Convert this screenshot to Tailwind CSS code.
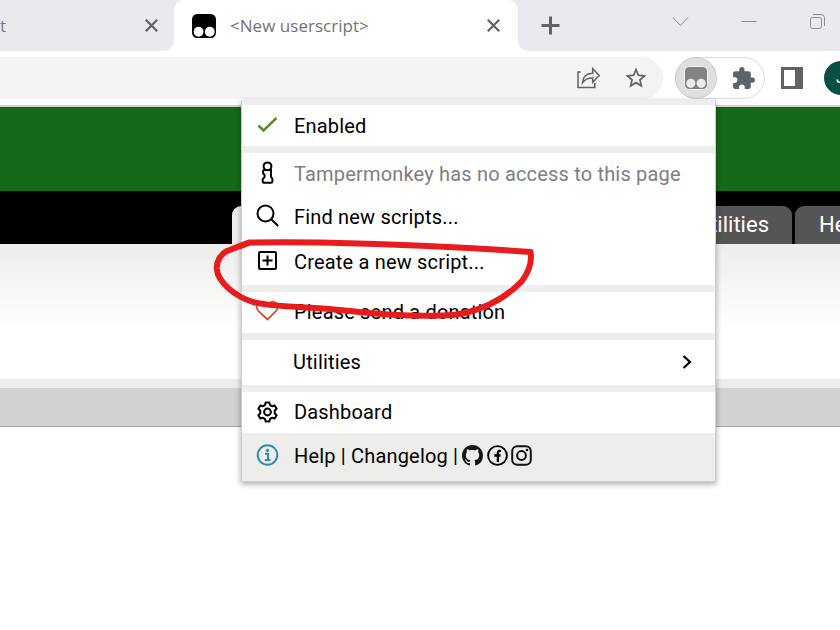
<!DOCTYPE html>
<html lang="en">
<head>
<meta charset="utf-8">
<title>Tampermonkey menu</title>
<script src="https://cdn.jsdelivr.net/npm/@tailwindcss/browser@4"></script>
</head>
<body class="bg-white">
<div class="relative flex h-[630px] w-[840px] flex-col overflow-hidden bg-white font-['Roboto',sans-serif]">
  <!-- Tab strip -->
  <div class="flex h-[51px] shrink-0 bg-white">
    <div class="flex w-[174px] items-center justify-between rounded-br-[10px] bg-[#e8eaed] pr-[16px] font-['Open_Sans',sans-serif] text-[17px] text-[#777a7e]">
      <span>t</span>
      <svg class="h-[13px] w-[13px]" viewBox="0 0 13 13" fill="none" stroke="#5f6368" stroke-width="2.2"><path d="M.8.8 12.2 12.2M12.2.8.8 12.2"/></svg>
    </div>
    <div class="w-[344px] bg-[#e8eaed]">
      <div class="flex h-full items-center rounded-t-[10px] bg-white pr-[18px] pl-[18px]">
        <svg class="h-[24px] w-[24px]" viewBox="0 0 23 23"><rect width="23" height="23" rx="5"/><circle cx="6.3" cy="17" r="4.7" fill="#fff"/><circle cx="17" cy="17" r="4.7" fill="#fff"/></svg>
        <span class="ml-[14px] grow font-['Open_Sans',sans-serif] text-[17px] tracking-[0.03px] text-[#707377]">&lt;New userscript&gt;</span>
        <svg class="h-[13px] w-[13px]" viewBox="0 0 13 13" fill="none" stroke="#5f6368" stroke-width="2.2"><path d="M.8.8 12.2 12.2M12.2.8.8 12.2"/></svg>
      </div>
    </div>
    <div class="flex grow items-start rounded-bl-[10px] bg-[#e8eaed] pl-[23px]">
      <svg class="mt-[16px] h-[19px] w-[19px] shrink-0" viewBox="0 0 19 19" fill="none" stroke="#5f6368" stroke-width="3"><path d="M9.5.5v18M.5 9.5h18"/></svg>
      <svg class="mt-[16px] ml-[112px] h-[11px] w-[17px] shrink-0" viewBox="0 0 17 11" fill="none" stroke="#8a8c8f"><path d="m1 1.500 7.500 8 7.500-8"/></svg>
      <svg class="mt-[16px] ml-[52px] h-[11px] w-[16px] shrink-0" viewBox="0 0 16 11" fill="none" stroke="#8a8c8f"><path d="M.5 5.500h15"/></svg>
      <svg class="mt-[13px] ml-[52px] h-[17px] w-[17px] shrink-0" viewBox="0 0 17 17" fill="none" stroke="#8a8c8f"><rect x="1.500" y="4.500" width="11" height="11" rx="2"/><path d="M4 1.500h8a3.500 3.500 0 0 1 3.500 3.500v8"/></svg>
    </div>
  </div>
  <!-- Toolbar -->
  <div class="flex h-[54px] shrink-0 items-start bg-white pt-[6px]">
    <div class="flex h-[42px] w-[663px] shrink-0 items-center justify-end rounded-r-full bg-[#f1f3f4] pr-[15px]">
      <svg class="h-[24px] w-[25px]" viewBox="0 0 25 24" fill="none" stroke="#5f6368" stroke-width="1.500"><path d="M4.700 6H2v15.500h16.800v-4.500"/><path d="M6.500 16.700c.4-5.600 3.900-9.200 10.200-9.400V2.700l6.500 6.900-6.500 6.700v-4.300c-4.500-.1-7.600 1.200-10.200 4.700Z"/></svg>
      <svg class="ml-[23px] h-[24px] w-[24px]" viewBox="0 0 24 24" fill="#5f6368"><path d="m22.700 9.200-7.700-.7L12 1.500l-3 7-7.700.7 5.800 5-1.700 7.400L12 17.700l6.600 3.900-1.700-7.400zM12 15.600l-4 2.400 1-4.500-3.500-3 4.700-.4L12 5.800l1.800 4.300 4.700.4-3.500 3L16 18z"/></svg>
    </div>
    <div class="ml-[12px] flex h-[42px] w-[90px] shrink-0 items-center rounded-full border border-[#dedfe0] shadow-[inset_0_0_1px_#ddd]">
      <div class="-ml-px flex h-[42px] w-[42px] items-center justify-center rounded-full border border-[#cdcdcd] bg-[#dfdfdf]">
        <svg class="h-[24px] w-[24px]" viewBox="0 0 24 24"><rect x=".5" y=".5" width="23" height="23" rx="5" fill="#828282" stroke="#f0f0f0"/><circle cx="6.800" cy="17.300" r="4.600" fill="#eaeaea"/><circle cx="17.200" cy="17.300" r="4.600" fill="#eaeaea"/></svg>
      </div>
      <svg class="ml-[14px] h-[25px] w-[25px]" viewBox="0 0 24 24" fill="#5f6368"><path d="M20.500 11H19V7c0-1.100-.9-2-2-2h-4V3.500a2.500 2.500 0 0 0-5 0V5H4c-1.100 0-2 .9-2 2v3.800h1.500a2.700 2.700 0 0 1 0 5.400H2V20c0 1.100.9 2 2 2h3.800v-1.500a2.700 2.700 0 0 1 5.400 0V22H17c1.100 0 2-.9 2-2v-4h1.500a2.500 2.500 0 0 0 0-5z"/></svg>
    </div>
    <svg class="mt-[10px] ml-[16px] h-[22px] w-[22px] shrink-0" viewBox="0 0 22 22"><path fill="#5f6368" fill-rule="evenodd" d="M0 0h22v22H0zM3 3v16h11V3z"/></svg>
    <div class="mt-[4px] ml-[21px] flex h-[34px] w-[34px] shrink-0 items-center rounded-full bg-[#075043] pl-[12px] text-[16px] text-white">J</div>
  </div>
  <div class="h-[2px] shrink-0 bg-[#d3d4d5]"></div>
  <!-- Page -->
  <div class="h-[84px] shrink-0 bg-[#146a18]"></div>
  <div class="flex h-[53px] shrink-0 items-end bg-black pl-[232px]">
    <div class="h-[38px] w-[120px] shrink-0 rounded-t-[9px] bg-[#ededeb]"></div>
    <div class="ml-[308px] flex h-[38px] w-[132px] shrink-0 items-center justify-end rounded-t-[9px] bg-[#555] pr-[23px] pb-[2px] text-[22px] text-white">Utilities</div>
    <div class="ml-[3px] flex h-[38px] w-[90px] shrink-0 items-center rounded-t-[9px] bg-[#555] pb-[2px] pl-[24px] text-[22px] text-white">Help</div>
  </div>
  <div class="h-[82px] shrink-0 bg-linear-to-b from-[#ededeb] to-white"></div>
  <div class="h-[53px] shrink-0 bg-white"></div>
  <div class="h-[9px] shrink-0 bg-[#ededeb]"></div>
  <div class="h-[39px] shrink-0 border-b border-[#a5a5a5] bg-[#d2d2d2]"></div>

  <!-- Extension popup -->
  <div class="absolute top-[100px] left-[241px] flex w-[475px] flex-col gap-[7px] border border-t-0 border-[#cfcfcf] bg-[#ededeb] pt-[5px] text-[20px] tracking-[0.18px] text-black shadow-[0_2px_6px_rgba(0,0,0,0.35)]">
    <div class="flex h-[41px] items-center bg-white pl-[13px]">
      <svg class="h-[24px] w-[24px]" viewBox="0 0 24 24" fill="none" stroke="#5c8f2c" stroke-width="2.600"><path d="m3.500 11.500 5 5L21.500 4"/></svg>
      <span class="ml-[15px]">Enabled</span>
    </div>
    <div class="flex flex-col bg-white">
      <div class="flex h-[42px] items-center pl-[13px] text-[#808080]">
        <svg class="-mt-[2px] h-[24px] w-[24px]" viewBox="0 0 24 24" fill="none" stroke="#000" stroke-width="2"><circle cx="12.500" cy="5.300" r="3.900"/><path d="M9.300 8.900h6.700v6.500c0 1.300 1.400 1.500 1.400 3v2c0 .9-.5 1.400-1.300 1.400H9c-.8 0-1.300-.5-1.300-1.400v-2c0-1.200 1.900-1.400 1.900-2.600v-1.500c0-1.100-1.500-1.200-1.500-2.300v-1.700c0-.8.500-1.400 1.200-1.400Z"/></svg>
        <span class="ml-[15px]">Tampermonkey has no access to this page</span>
      </div>
      <div class="flex h-[45px] items-center pb-[2px] pl-[13px]">
        <svg class="-mt-[1px] h-[24px] w-[24px]" viewBox="0 0 24 24" fill="none" stroke="#000" stroke-width="2"><circle cx="10.500" cy="9.500" r="8"/><path d="m16.200 15.300 7 6.700"/></svg>
        <span class="ml-[15px]">Find new scripts...</span>
      </div>
      <div class="flex h-[45px] items-center pb-[2px] pl-[13px]">
        <svg class="h-[24px] w-[24px]" viewBox="0 0 24 24" fill="none" stroke="#000" stroke-width="2"><rect x="4" y="2" width="17" height="17" rx="1"/><path d="M12.500 5.500v10M7.500 10.500h10"/></svg>
        <span class="ml-[15px]">Create a new script...</span>
      </div>
    </div>
    <div class="flex h-[41px] items-center bg-white pb-[2px] pl-[13px]">
      <svg class="-mt-[2px] h-[24px] w-[24px]" viewBox="0 0 24 24" fill="none" stroke="#dd4a33" stroke-width="1.800"><path d="M12.500 20.500 3.300 11.800C1.300 9.700 1 6.300 3.200 4.200 5.700 2 10.200 2.200 12.500 5.500c2.200-3.300 6.300-3.500 8.800-1.300 2.200 2.100 1.900 5.500-.1 7.600Z"/></svg>
      <span class="ml-[15px]">Please send a donation</span>
    </div>
    <div class="flex h-[45px] items-center justify-between bg-white pr-[23px] pb-[2px] pl-[51px]">
      <span>Utilities</span>
      <svg class="h-[14px] w-[10px]" viewBox="0 0 10 14" fill="none" stroke="#000" stroke-width="2.200"><path d="m1.500 1 6.500 6-6.500 6"/></svg>
    </div>
    <div class="flex flex-col">
      <div class="flex h-[41px] items-center bg-white pb-[2px] pl-[13px]">
        <svg class="h-[24px] w-[24px]" viewBox="0 0 24 24" fill="none" stroke="#000" stroke-width="2" stroke-linejoin="round"><circle cx="12.500" cy="12" r="3.400"/><path d="M10.700 2.500h3.600l.8 2.600 1.900 1.100 2.700-.7 1.900 3.300-1.900 2v2.400l1.900 2-1.900 3.300-2.700-.7-1.900 1.100-.8 2.600h-3.600l-.8-2.600-1.900-1.100-2.700.7-1.900-3.300 1.900-2v-2.400l-1.900-2 1.900-3.300 2.700.7 1.900-1.100Z"/></svg>
        <span class="ml-[15px]">Dashboard</span>
      </div>
      <div class="flex h-[48px] items-center pb-[3px] pl-[13px]">
        <svg class="-mt-[2px] h-[24px] w-[24px]" viewBox="0 0 24 24" fill="none" stroke="#258eb3" stroke-width="1.900"><circle cx="12.500" cy="12" r="9.800"/><path d="M10 10.800h3V17M9.800 17h5.700" stroke-width="2"/><circle cx="12.500" cy="7.300" r="1.600" fill="#258eb3" stroke="none"/></svg>
        <span class="ml-[15px] whitespace-pre">Help | Changelog |</span>
        <svg class="ml-[4px] h-[21px] w-[21px]" viewBox="0 0 16 16" fill="#161616"><path d="M8 0C3.580 0 0 3.580 0 8c0 3.540 2.290 6.530 5.470 7.590.4.070.55-.17.55-.38 0-.19-.01-.82-.01-1.490-2.010.37-2.530-.49-2.690-.94-.09-.23-.48-.94-.82-1.130-.28-.15-.68-.52-.01-.53.63-.01 1.080.58 1.230.82.72 1.210 1.870.87 2.330.66.070-.52.280-.87.510-1.070-1.780-.2-3.640-.89-3.640-3.950 0-.87.310-1.590.82-2.150-.08-.2-.36-1.020.08-2.120 0 0 .67-.21 2.200.82.64-.18 1.320-.27 2-.27s1.360.09 2 .27c1.530-1.040 2.200-.82 2.200-.82.44 1.100.16 1.920.08 2.120.51.560.82 1.270.82 2.150 0 3.070-1.870 3.750-3.650 3.950.29.25.54.73.54 1.480 0 1.070-.01 1.930-.01 2.200 0 .21.15.46.55.38A8.010 8.010 0 0 0 16 8c0-4.420-3.580-8-8-8Z"/></svg>
        <svg class="ml-[4px] h-[21px] w-[21px]" viewBox="0 0 21 21" fill="none" stroke="#000" stroke-width="1.900"><circle cx="10.500" cy="10.500" r="9.400"/><path d="M14 5.900h-1.200c-1.300 0-1.900.7-1.900 2V17M7.300 10.500h6.200" stroke-width="2.300"/></svg>
        <svg class="ml-[3px] h-[21px] w-[21px]" viewBox="0 0 21 21" fill="none" stroke="#111" stroke-width="2"><rect x="1.200" y="1.200" width="18.600" height="18.600" rx="5"/><circle cx="10.500" cy="10.500" r="4.400"/><circle cx="16" cy="5" r="1.300" fill="#111" stroke="none"/></svg>
      </div>
    </div>
  </div>

  <!-- Hand-drawn highlight -->
  <svg class="absolute top-[230px] left-[200px] h-[110px] w-[350px]" viewBox="0 0 350 110" fill="none" stroke="#e81c1c" stroke-width="6" stroke-linecap="round" stroke-linejoin="round"><path d="M330.500 22 C275 18 185 14 130 12.800 C95 12 68 12.300 50 12.500 C43 14.500 34 18.500 27 21 C20 24.500 16.500 32 16.800 39 C18 52 34 66 53 72 C75 78 110 76 145 80.500 C180 84.500 215 86.500 242 85.500 C278 85 306 68 322 51 C330 40 332 30 330.500 22"/></svg>
</div>
</body>
</html>
